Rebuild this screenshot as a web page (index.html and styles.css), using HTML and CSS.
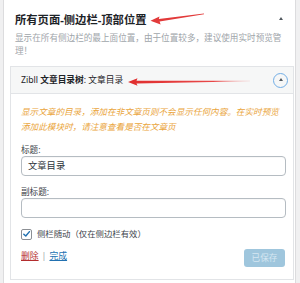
FILE: index.html
```html
<!DOCTYPE html>
<html lang="zh-CN">
<head>
<meta charset="utf-8">
<link rel="stylesheet" href="styles.css">
</head>
<body>
<div class="page">
  <div class="panel">
    <div class="title-row">
      <h2 class="title">所有页面-侧边栏-顶部位置</h2>
      <span class="tri"></span>
    </div>
    <p class="desc">显示在所有侧边栏的最上面位置，由于位置较多，建议使用实时预览管理！</p>
    <div class="widget">
      <div class="w-head">
        <div class="w-title">Zibll <b>文章目录树</b>: 文章目录</div>
        <span class="toggle"><span class="tri small"></span></span>
      </div>
      <div class="w-body">
        <p class="note">显示文章的目录，添加在非文章页则不会显示任何内容。在实时预览添加此模块时，请注意查看是否在文章页</p>
        <label class="lbl">标题:</label>
        <div class="input">文章目录</div>
        <label class="lbl second">副标题:</label>
        <div class="input"></div>
        <div class="check-row">
          <span class="checkbox"><svg width="10" height="10" viewBox="0 0 10 10"><path d="M2 5.2 L4.2 7.3 L8.3 2.4" fill="none" stroke="#2271b1" stroke-width="1.6" stroke-linecap="round" stroke-linejoin="round"/></svg></span>
          <span class="check-text">侧栏随动（仅在侧边栏有效）</span>
        </div>
        <div class="actions">
          <div class="links"><a class="del">删除</a><span class="sep">|</span><a class="done">完成</a></div>
          <span class="btn">已保存</span>
        </div>
      </div>
    </div>
  </div>
  <svg class="arrow a1" width="300" height="100" viewBox="0 0 300 100">
    <polygon points="150.5,20.8 159.5,16.6 158.8,18.9 204,13.6 204,14.2 159.6,21.6 160.6,24.4" fill="#e23a3a"/>
  </svg>
  <svg class="arrow a2" width="300" height="100" viewBox="0 0 300 100">
    <defs>
      <linearGradient id="g2" x1="0" x2="1" y1="0" y2="0">
        <stop offset="0" stop-color="#e02e2e"/>
        <stop offset="0.7" stop-color="#e84848"/>
        <stop offset="1" stop-color="#f08080" stop-opacity="0.3"/>
      </linearGradient>
    </defs>
    <polygon points="128,82 137.5,78.3 136.5,80.7 250,80.7 250,81.3 136.5,83.4 137.5,85.8" fill="url(#g2)"/>
  </svg>
</div>
</body>
</html>
```
FILE: styles.css
```css
* { box-sizing: border-box; }
html, body { margin: 0; padding: 0; }
body {
  font-family: "Noto Sans", "Noto Sans CJK SC", sans-serif;
  color: #2c3338;
}
.page {
  position: relative;
  width: 300px;
  height: 283px;
  background: #f0f0f1;
  overflow: hidden;
}
.panel {
  margin-left: 3px;
  width: 293px;
  height: 283px;
  background: #fff;
  border-left: 1px solid #dcdcde;
  border-right: 1px solid #dcdcde;
  padding-top: 11px;
}
.title-row {
  display: flex;
  align-items: center;
  justify-content: space-between;
  padding: 0 12px 0 11px;
}
.title {
  margin: 0;
  font-size: 11.3px;
  line-height: 18px;
  font-weight: 700;
  color: #1d2327;
}
.tri {
  width: 0;
  height: 0;
  border-left: 2.5px solid transparent;
  border-right: 2.5px solid transparent;
  border-bottom: 3.5px solid #50575e;
  margin-top: -4px;
}
.desc {
  margin: 3px 10px 0 11px;
  font-size: 8.6px;
  line-height: 13px;
  color: #a0a5aa;
}
.widget {
  margin: 8px 1px 0 6px;
  border: 1px solid #e2e4e7;
  background: #fff;
}
.w-head {
  height: 27px;
  display: flex;
  align-items: center;
  justify-content: space-between;
  padding: 0 5px 0 10px;
  background: #f6f7f7;
  border-bottom: 1px solid #e2e4e7;
}
.w-title {
  font-size: 8.7px;
  line-height: 12px;
  color: #1d2327;
}
.w-title b { font-weight: 700; }
.toggle {
  width: 15px;
  height: 15px;
  border: 1px solid #72aee6;
  border-radius: 50%;
  display: flex;
  align-items: center;
  justify-content: center;
}
.tri.small {
  margin-top: -1px;
  border-left-width: 2.5px;
  border-right-width: 2.5px;
  border-bottom-width: 3px;
}
.w-body {
  padding: 11px 7px 12px 10px;
}
.note {
  margin: 0;
  font-size: 8.6px;
  line-height: 15px;
  font-style: italic;
  color: #eaa53c;
}
.lbl {
  display: block;
  margin-top: 9px;
  font-size: 8.6px;
  line-height: 12px;
  color: #3c434a;
}
.lbl.second { margin-top: 10px; }
.input {
  height: 20px;
  border: 1px solid #b5bcc2;
  border-radius: 4px;
  padding: 0 6px;
  font-size: 9.3px;
  line-height: 18px;
  color: #2c3338;
  box-shadow: inset 0 1px 1px rgba(0,0,0,0.03);
}
.check-row {
  margin-top: 10px;
  display: flex;
  align-items: center;
  gap: 5px;
  height: 12px;
}
.checkbox {
  width: 11px;
  height: 11px;
  border: 1px solid #8c8f94;
  border-radius: 2px;
  display: flex;
  align-items: center;
  justify-content: center;
  background: #fff;
}
.checkbox svg { display: block; }
.check-text {
  font-size: 8.4px;
  line-height: 12px;
  color: #3c434a;
}
.actions {
  margin-top: 9px;
  display: flex;
  justify-content: space-between;
  align-items: flex-start;
  padding-right: 1px;
}
.links {
  font-size: 8.8px;
  line-height: 12px;
  padding-top: 1px;
  display: flex;
  gap: 3px;
}
.del { color: #b32d2e; text-decoration: underline; }
.done { color: #2271b1; text-decoration: underline; }
.sep { color: #a0a5aa; }
.btn {
  width: 41px;
  height: 18px;
  border-radius: 3px;
  background: #9fc6dd;
  color: #d6e7f2;
  font-size: 8.6px;
  line-height: 18px;
  text-align: center;
}
.arrow {
  position: absolute;
  left: 0;
  top: 0;
  pointer-events: none;
}
```
